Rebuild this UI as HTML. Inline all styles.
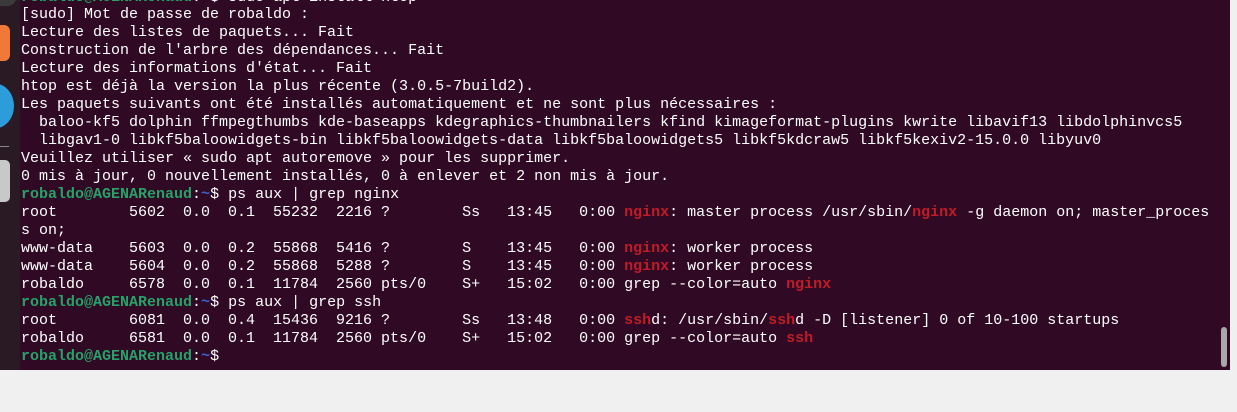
<!DOCTYPE html>
<html><head><meta charset="utf-8"><style>
html,body{margin:0;padding:0;width:1237px;height:412px;overflow:hidden;background:#f0f0f0;}
#term{position:absolute;left:0;top:0;width:1230px;height:370px;background:#300a24;}
#dock{position:absolute;left:0;top:0;width:20px;height:370px;background:#2a1a23;}
pre{position:absolute;left:21px;top:-11.5px;margin:0;font-family:"Liberation Mono",monospace;font-size:15px;line-height:17.97px;color:#ffffff;white-space:pre;}
.g{color:#26a269;font-weight:bold}.b{color:#3465d0;font-weight:bold}.r{color:#c01c28;font-weight:bold}
</style></head><body>
<div id="term"></div>
<div id="dock">
<div style="position:absolute;left:-14px;top:-12px;width:30px;height:18px;border-radius:8px;background:#3a3a3a"></div>
<div style="position:absolute;left:-20px;top:25px;width:30px;height:36px;border-radius:6px;background:#f0793a"></div>
<div style="position:absolute;left:-22px;top:84px;width:36px;height:44px;border-radius:50%;background:#2d9cdb"></div>
<div style="position:absolute;left:0;top:146px;width:9px;height:1px;background:#888"></div>
<div style="position:absolute;left:-20px;top:160px;width:30px;height:42px;border-radius:5px;background:#c8c8c8"></div>
</div>
<pre><span class="g">robaldo@AGENARenaud</span>:<span class="b">~</span>$ sudo apt install htop
[sudo] Mot de passe de robaldo : 
Lecture des listes de paquets... Fait
Construction de l'arbre des dépendances... Fait
Lecture des informations d'état... Fait
htop est déjà la version la plus récente (3.0.5-7build2).
Les paquets suivants ont été installés automatiquement et ne sont plus nécessaires :
  baloo-kf5 dolphin ffmpegthumbs kde-baseapps kdegraphics-thumbnailers kfind kimageformat-plugins kwrite libavif13 libdolphinvcs5
  libgav1-0 libkf5baloowidgets-bin libkf5baloowidgets-data libkf5baloowidgets5 libkf5kdcraw5 libkf5kexiv2-15.0.0 libyuv0
Veuillez utiliser « sudo apt autoremove » pour les supprimer.
0 mis à jour, 0 nouvellement installés, 0 à enlever et 2 non mis à jour.
<span class="g">robaldo@AGENARenaud</span>:<span class="b">~</span>$ ps aux | grep nginx
root        5602  0.0  0.1  55232  2216 ?        Ss   13:45   0:00 <span class="r">nginx</span>: master process /usr/sbin/<span class="r">nginx</span> -g daemon on; master_proces
s on;
www-data    5603  0.0  0.2  55868  5416 ?        S    13:45   0:00 <span class="r">nginx</span>: worker process
www-data    5604  0.0  0.2  55868  5288 ?        S    13:45   0:00 <span class="r">nginx</span>: worker process
robaldo     6578  0.0  0.1  11784  2560 pts/0    S+   15:02   0:00 grep --color=auto <span class="r">nginx</span>
<span class="g">robaldo@AGENARenaud</span>:<span class="b">~</span>$ ps aux | grep ssh
root        6081  0.0  0.4  15436  9216 ?        Ss   13:48   0:00 <span class="r">ssh</span>d: /usr/sbin/<span class="r">ssh</span>d -D [listener] 0 of 10-100 startups
robaldo     6581  0.0  0.1  11784  2560 pts/0    S+   15:02   0:00 grep --color=auto <span class="r">ssh</span>
<span class="g">robaldo@AGENARenaud</span>:<span class="b">~</span>$ </pre>
<div style="position:absolute;left:1221px;top:327px;width:6px;height:40px;border-radius:3px;background:#a8a8a8"></div>
</body></html>
